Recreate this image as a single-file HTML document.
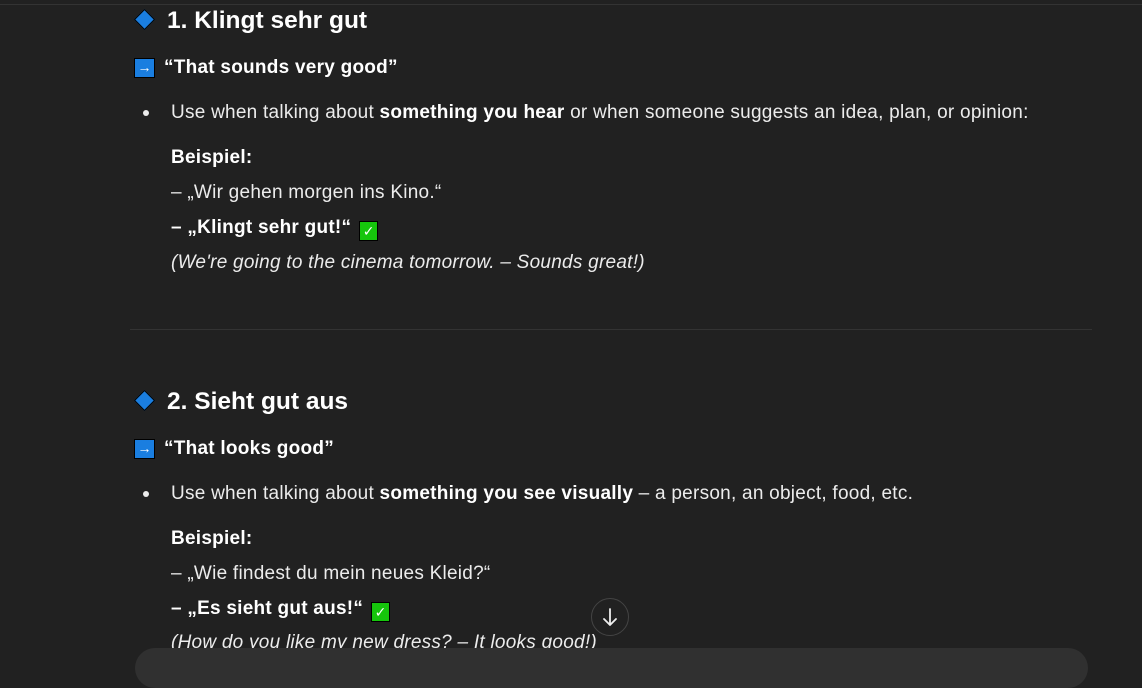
<!DOCTYPE html>
<html><head><meta charset="utf-8"><style>
body{margin:0;width:1142px;height:660px;background:#212121;overflow:hidden;font-family:"Liberation Sans","DejaVu Sans",sans-serif;color:#ececec;position:relative}
.t{position:absolute;white-space:nowrap;font-size:19px;letter-spacing:0.25px;line-height:22px}
b{font-weight:bold;color:#fff}
.h{font-size:24.5px;letter-spacing:0;font-weight:bold;color:#fff;line-height:30px}
.dia{position:absolute;width:13px;height:13px;background:#1a7ee0;transform:rotate(45deg);border:1.5px solid #000}
.arr{position:absolute;width:21px;height:20px;background:#1a7ee0;border:1px solid #000;color:#fff;font-size:14px;line-height:16px;text-align:center;box-sizing:border-box}
.chk{display:inline-block;width:19px;height:20px;background:#16c60c;border:1px solid #000;color:#fff;font-size:14px;line-height:19px;text-align:center;vertical-align:-3px;margin-left:8px;box-sizing:border-box}
.dot{position:absolute;width:6px;height:6px;border-radius:50%;background:#ececec}
i{font-style:italic}
</style></head><body>
<div style="position:absolute;left:0;top:4px;width:1142px;height:1px;background:#333"></div>
<div class="dia" style="left:137px;top:12px"></div>
<div class="t h" style="left:167px;top:6px">1. Klingt sehr gut</div>
<div class="arr" style="left:134px;top:58px">→</div>
<div class="t" style="left:164px;top:57px"><b>“That sounds very good”</b></div>
<div class="dot" style="left:143px;top:110px"></div>
<div class="t" style="left:171px;top:102px">Use when talking about <b>something you hear</b> or when someone suggests an idea, plan, or opinion:</div>
<div class="t" style="left:171px;top:147px"><b>Beispiel:</b></div>
<div class="t" style="left:171px;top:182px">– „Wir gehen morgen ins Kino.“</div>
<div class="t" style="left:171px;top:217px"><b>– „Klingt sehr gut!“</b><span class="chk">✓</span></div>
<div class="t" style="left:171px;top:252px"><i>(We're going to the cinema tomorrow. – Sounds great!)</i></div>
<div style="position:absolute;left:130px;top:329px;width:962px;height:1px;background:#333"></div>
<div class="dia" style="left:137px;top:393px"></div>
<div class="t h" style="left:167px;top:387px">2. Sieht gut aus</div>
<div class="arr" style="left:134px;top:439px">→</div>
<div class="t" style="left:164px;top:438px"><b>“That looks good”</b></div>
<div class="dot" style="left:143px;top:491px"></div>
<div class="t" style="left:171px;top:483px">Use when talking about <b>something you see visually</b> – a person, an object, food, etc.</div>
<div class="t" style="left:171px;top:528px"><b>Beispiel:</b></div>
<div class="t" style="left:171px;top:563px">– „Wie findest du mein neues Kleid?“</div>
<div class="t" style="left:171px;top:598px"><b>– „Es sieht gut aus!“</b><span class="chk">✓</span></div>
<div class="t" style="left:171px;top:632px"><i>(How do you like my new dress? – It looks good!)</i></div>
<div style="position:absolute;left:591px;top:598px;width:38px;height:38px;border-radius:50%;border:1px solid #444;background:#212121;box-sizing:border-box">
<svg width="36" height="36" viewBox="0 0 36 36"><path d="M18 10v16M12 20l6 6 6-6" stroke="#eee" stroke-width="1.8" fill="none" stroke-linecap="round" stroke-linejoin="round"/></svg></div>
<div style="position:absolute;left:135px;top:648px;width:953px;height:40px;border-radius:24px;background:#303030"></div>
</body></html>
